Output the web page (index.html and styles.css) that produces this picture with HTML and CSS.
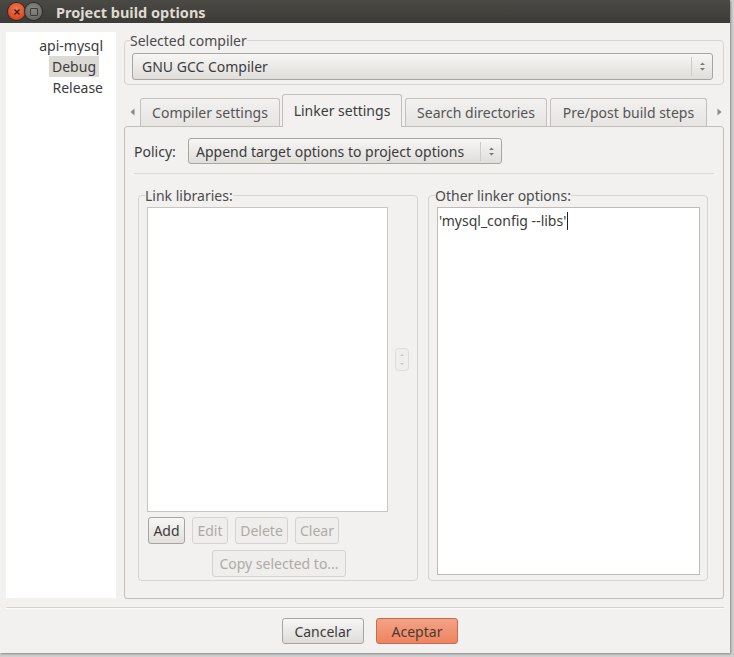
FILE: index.html
```html
<!DOCTYPE html>
<html>
<head>
<meta charset="utf-8">
<link rel="stylesheet" href="styles.css">
</head>
<body>
<div class="window">
  <div class="titlebar">
    <span class="wbtn close"><svg width="8" height="8" viewBox="0 0 8 8"><path d="M1.5 1.5 L6.5 6.5 M6.5 1.5 L1.5 6.5" stroke="#3a1a10" stroke-width="1.4"/></svg></span>
    <span class="wbtn mini"><span class="sq"></span></span>
    <span class="title">Project build options</span>
  </div>
  <div class="main">
    <div class="targets">
      <div class="target">api-mysql</div>
      <div class="target sel">Debug</div>
      <div class="target">Release</div>
    </div>
    <div class="right">
      <fieldset class="group compgroup">
        <legend>Selected compiler</legend>
        <div class="combo wide">
          <span class="ctext">GNU GCC Compiler</span>
          <span class="csep"></span>
          <svg class="carrows" width="7" height="11" viewBox="0 0 7 11"><path d="M1 4 L3.5 1.5 L6 4 Z M1 7 L3.5 9.5 L6 7 Z" fill="#7a7a7a"/></svg>
        </div>
      </fieldset>
      <div class="tabs">
        <span class="tarrow left"><svg width="5" height="8" viewBox="0 0 5 8"><path d="M4.5 0.5 L0.5 4 L4.5 7.5 Z" fill="#8a8a8a"/></svg></span>
        <div class="tab t1">Compiler settings</div>
        <div class="tab active">Linker settings</div>
        <div class="tab t3">Search directories</div>
        <div class="tab t4">Pre/post build steps</div>
        <span class="tarrow rightarrow"><svg width="5" height="8" viewBox="0 0 5 8"><path d="M0.5 0.5 L4.5 4 L0.5 7.5 Z" fill="#8a8a8a"/></svg></span>
      </div>
      <div class="panel">
        <div class="policy">
          <span class="plabel">Policy:</span>
          <div class="combo pcombo">
            <span class="ctext">Append target options to project options</span>
            <span class="csep"></span>
            <svg class="carrows" width="7" height="11" viewBox="0 0 7 11"><path d="M1 4 L3.5 1.5 L6 4 Z M1 7 L3.5 9.5 L6 7 Z" fill="#7a7a7a"/></svg>
          </div>
        </div>
        <div class="hsep"></div>
        <div class="groups">
          <fieldset class="group libgroup">
            <legend>Link libraries:</legend>
            <div class="librow">
              <div class="list"></div>
              <div class="spin">
                <svg width="14" height="23" viewBox="0 0 14 23"><rect x="0.5" y="0.5" width="13" height="22" rx="3" fill="#efeeed" stroke="#dedcd9"/><path d="M5 8 L7 6 L9 8 Z M5 15 L7 17 L9 15 Z" fill="#c9c7c4"/></svg>
              </div>
            </div>
            <div class="btnrow">
              <button class="btn b-add">Add</button>
              <button class="btn dis b-edit">Edit</button>
              <button class="btn dis b-del">Delete</button>
              <button class="btn dis b-clr">Clear</button>
            </div>
            <div class="copyrow">
              <button class="btn dis copy">Copy selected to...</button>
            </div>
          </fieldset>
          <fieldset class="group othgroup">
            <legend>Other linker options:</legend>
            <div class="textarea"><span>'mysql_config --libs'</span><span class="caret"></span></div>
          </fieldset>
        </div>
      </div>
    </div>
  </div>
  <div class="bsep"></div>
  <div class="actions">
    <button class="abtn">Cancelar</button>
    <button class="abtn ok">Aceptar</button>
  </div>
</div>
</body>
</html>
```
FILE: styles.css
```css
* { box-sizing: border-box; }
body {
  margin: 0;
  width: 734px;
  height: 657px;
  background: #cfcfcf;
  font-family: "Noto Sans", "Open Sans", sans-serif;
  font-size: 14px;
  color: #3c3c3c;
  overflow: hidden;
}
.window {
  width: 730px;
  height: 653px;
  background: #f2f1f0;
  box-shadow: 1px 1px 2px rgba(0,0,0,0.35);
  display: flex;
  flex-direction: column;
}
.titlebar {
  height: 23px;
  background: linear-gradient(#4a4944, #3c3b37);
  display: flex;
  align-items: center;
  padding-left: 8px;
}
.wbtn {
  width: 17px;
  height: 17px;
  border-radius: 50%;
  display: flex;
  align-items: center;
  justify-content: center;
}
.close {
  background: radial-gradient(circle at 50% 35%, #f47a52, #dc4a1f 70%);
  box-shadow: 0 0 0 1px #2e2d2a;
}
.mini {
  background: radial-gradient(circle at 50% 35%, #8a8985, #6b6a66 70%);
  box-shadow: 0 0 0 1px #2e2d2a;
}
.sq {
  width: 8px;
  height: 8px;
  border: 1.5px solid #3c3b37;
  border-radius: 1px;
}
.title {
  margin-left: 14px;
  color: #dfdbd2;
  font-weight: bold;
  font-size: 14.5px;
}
.main {
  display: flex;
  padding: 9px 6px 0 6px;
  height: 576px;
}
.targets {
  width: 110px;
  height: 566px;
  background: #ffffff;
  display: flex;
  flex-direction: column;
  align-items: flex-end;
  padding-top: 3px;
  padding-right: 10px;
}
.target {
  height: 21px;
  line-height: 21px;
  padding: 0 3px;
}
.target.sel {
  background: #dcdad5;
  margin-right: 7px;
}
.right {
  margin-left: 8px;
  width: 600px;
  display: flex;
  flex-direction: column;
}
.group {
  margin: 0;
  border: 1px solid #d8d5d0;
  border-radius: 4px;
}
.group legend {
  padding: 0;
  margin-left: -2px;
  line-height: 17px;
  color: #4c4c4c;
}
.compgroup {
  height: 53px;
  padding: 4px 10px 0 7px;
}
.combo {
  height: 27px;
  border: 1px solid #aaa69f;
  border-radius: 3px;
  background: linear-gradient(#f7f6f5, #e0dedb);
  display: flex;
  align-items: center;
  padding-left: 9px;
  white-space: nowrap;
}
.combo .ctext { flex: 1; }
.csep {
  width: 1px;
  height: 19px;
  background: #cfccc8;
  margin-right: 7px;
}
.carrows { margin-right: 6px; }
.tabs {
  display: flex;
  align-items: flex-end;
  height: 41px;
  white-space: nowrap;
}
.tarrow {
  align-self: flex-end;
  height: 29px;
  display: flex;
  align-items: center;
}
.tarrow.left { width: 16px; padding-left: 6px; }
.tarrow.rightarrow { width: 17px; padding-left: 10px; }
.tab {
  height: 29px;
  border: 1px solid #c4c1bc;
  border-bottom: none;
  border-radius: 3px 3px 0 0;
  background: linear-gradient(#f2f1f0, #e6e4e1);
  color: #555555;
  text-align: center;
  line-height: 28px;
  margin-bottom: -1px;
  flex: none;
}
.t1 { width: 140px; margin-right: 2px; }
.tab.active {
  width: 120px;
  height: 33px;
  background: #f2f1f0;
  color: #3c3c3c;
  position: relative;
  z-index: 1;
  line-height: 31px;
  margin-right: 3px;
}
.t3 { width: 142px; margin-right: 3px; }
.t4 { width: 157px; }
.panel {
  flex: 1;
  border: 1px solid #c2bfba;
  border-radius: 3px;
  padding: 11px 9px 0 9px;
  display: flex;
  flex-direction: column;
}
.policy {
  display: flex;
  align-items: center;
  height: 26px;
}
.plabel { width: 54px; }
.pcombo { width: 314px; height: 26px; padding-left: 7px; }
.hsep {
  height: 1px;
  background: #dcd9d5;
  margin: 9px 0 0 0;
}
.groups {
  display: flex;
  gap: 10px;
  margin: 13px 6px 0 4px;
}
.libgroup, .othgroup {
  width: 280px;
  height: 394px;
}
.libgroup {
  padding: 3px 8px 0 8px;
}
.librow {
  display: flex;
  align-items: center;
}
.list {
  width: 241px;
  height: 305px;
  background: #fff;
  border: 1px solid #c8c5c0;
}
.spin {
  margin-left: 7px;
  height: 23px;
  display: flex;
}
.btnrow {
  display: flex;
  gap: 7px;
  margin-top: 5px;
  padding-left: 1px;
}
.btn {
  font-family: inherit;
  font-size: 14px;
  height: 27px;
  border: 1px solid #a9a59e;
  border-radius: 3px;
  background: linear-gradient(#f7f6f5, #e2e0dd);
  color: #3c3c3c;
  padding: 0;
  margin: 0;
  text-align: center;
}
.b-add { width: 37px; }
.b-edit { width: 36px; }
.b-del { width: 53px; }
.b-clr { width: 44px; }
.btn.dis {
  color: #aeaba6;
  border-color: #d6d3ce;
  background: #efeeec;
}
.copyrow {
  display: flex;
  justify-content: center;
  margin-top: 6px;
  padding-left: 2px;
}
.copy { width: 134px; }
.othgroup {
  padding: 3px 7px 0 8px;
}
.textarea {
  height: 368px;
  background: #fff;
  border: 1px solid #bfbcb7;
  padding: 3px 0 0 1px;
  color: #3c3c3c;
  display: flex;
  align-items: flex-start;
  white-space: nowrap;
}
.caret {
  width: 1px;
  height: 18px;
  background: #222;
  margin-left: 1px;
  margin-top: 1px;
}
.bsep {
  height: 1px;
  background: #d6d3ce;
  margin: 8px 6px 0 6px;
  box-shadow: 0 1px 0 #fbfbfa;
}
.actions {
  display: flex;
  justify-content: center;
  gap: 12px;
  padding-left: 10px;
  margin-top: 10px;
}
.abtn {
  font-family: inherit;
  font-size: 14px;
  width: 82px;
  height: 26px;
  border: 1px solid #a9a59e;
  border-radius: 3px;
  background: linear-gradient(#f7f6f5, #dedcd9);
  color: #3c3c3c;
  margin: 0;
}
.abtn.ok {
  background: linear-gradient(#f4a286, #ee8460);
  border-color: #c86a4c;
  color: #4a3a35;
}
```
